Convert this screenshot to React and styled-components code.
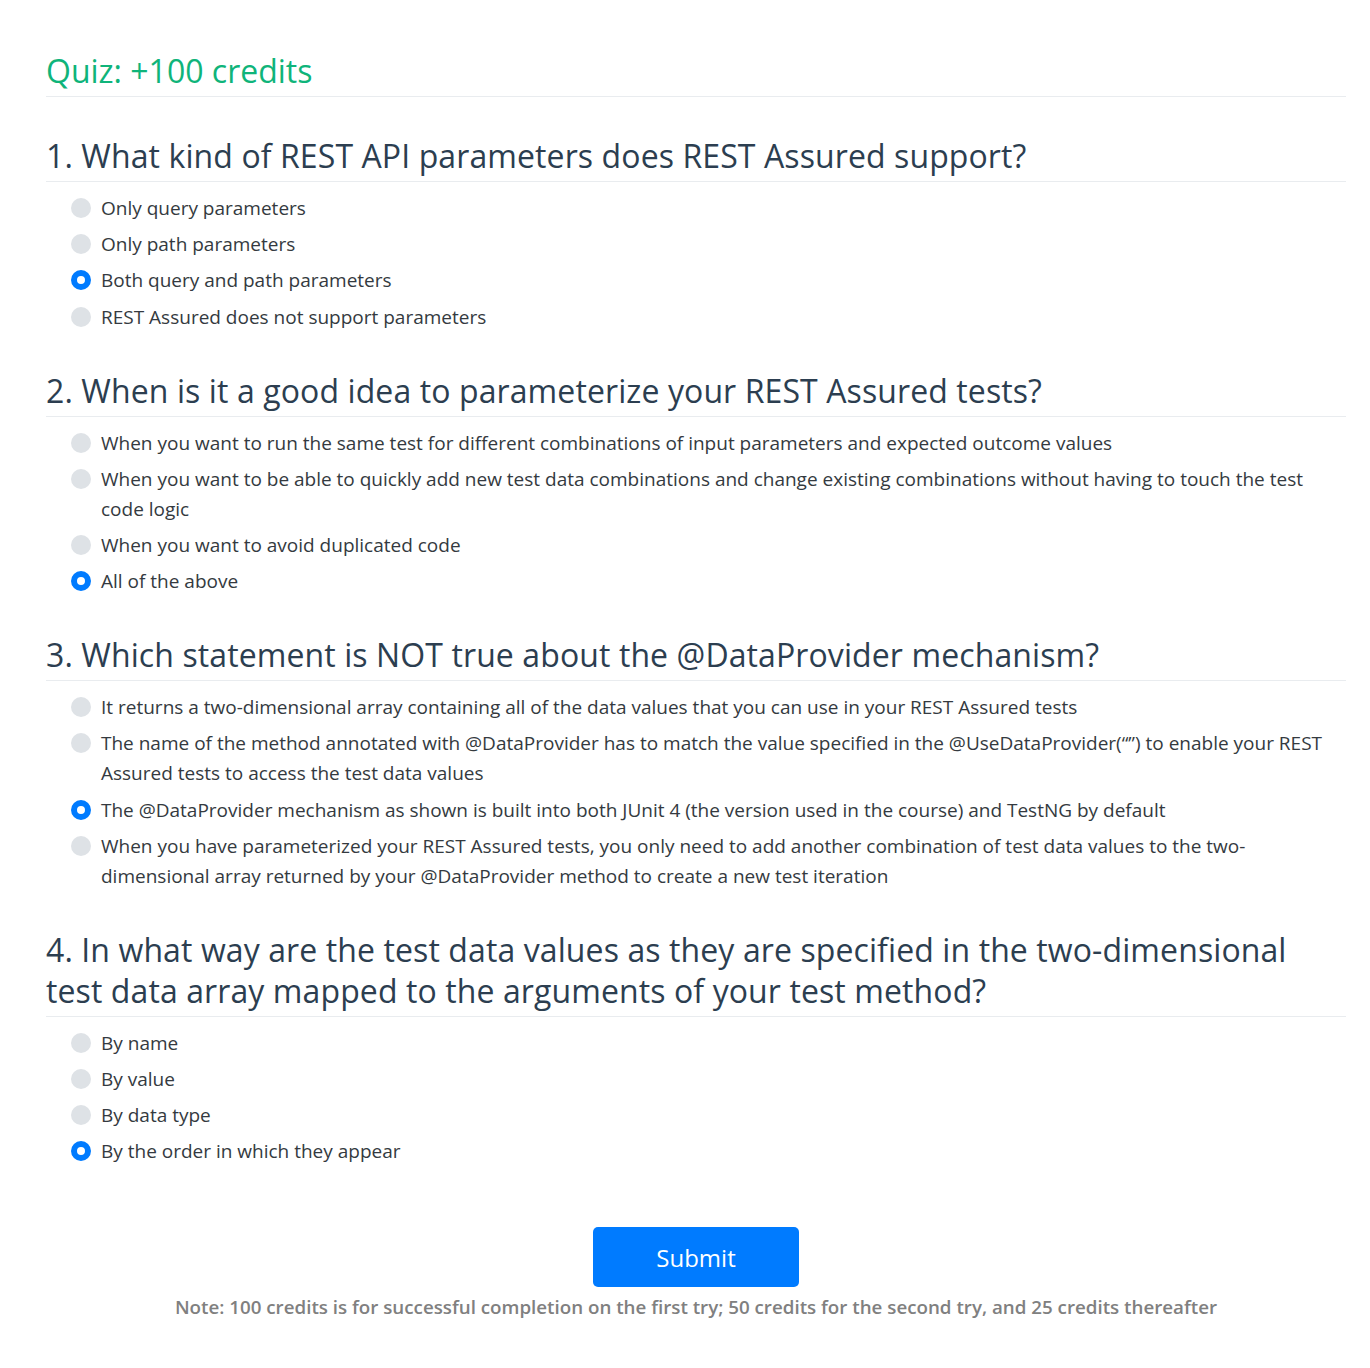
import React from "react";
import styled, { createGlobalStyle } from "styled-components";

const Global = createGlobalStyle`
  html, body { margin: 0; padding: 0; background: #fff; }
  body { font-family: "Open Sans", "Noto Sans", sans-serif; }
`;

const Page = styled.div`
  padding: 50px 24px 30px 46px;
`;

const Title = styled.h1`
  margin: 0;
  font-size: 32px;
  font-weight: 400;
  color: #0fb47a;
  line-height: 41px;
  padding-bottom: 5px;
  border-bottom: 1px solid #e9ecef;
`;

const Question = styled.section`
  margin-top: 38px;
`;

const QHeading = styled.h2`
  margin: 0;
  font-size: 32px;
  font-weight: 500;
  letter-spacing: 0.1px;
  color: #2c3e50;
  line-height: 41px;
  padding-bottom: 5px;
  border-bottom: 1px solid #e9ecef;
`;

const Options = styled.div`
  padding: 11px 0 0 25px;
  display: flex;
  flex-direction: column;
  gap: 6.2px;
`;

const Option = styled.label`
  display: flex;
  align-items: flex-start;
  font-size: 19px;
  line-height: 30px;
  color: #343a40;
`;

const Radio = styled.span`
  flex: none;
  width: 20px;
  height: 20px;
  border-radius: 50%;
  margin: 5px 10px 0 0;
  box-sizing: border-box;
  background: ${(p) => (p.$checked ? "#fff" : "#dee2e6")};
  border: ${(p) => (p.$checked ? "6px solid #007bff" : "none")};
`;

const Footer = styled.div`
  margin-top: 61px;
  display: flex;
  flex-direction: column;
  align-items: center;
`;

const SubmitButton = styled.button`
  width: 206px;
  height: 60px;
  border: none;
  border-radius: 5px;
  background: #007bff;
  color: #fff;
  font-family: inherit;
  font-size: 24px;
  cursor: pointer;
`;

const Note = styled.p`
  margin: 7px 0 0;
  font-size: 18.75px;
  font-weight: 600;
  color: #808080;
`;

const questions = [
  {
    q: "1. What kind of REST API parameters does REST Assured support?",
    opts: [
      "Only query parameters",
      "Only path parameters",
      "Both query and path parameters",
      "REST Assured does not support parameters",
    ],
    a: 2,
  },
  {
    q: "2. When is it a good idea to parameterize your REST Assured tests?",
    opts: [
      "When you want to run the same test for different combinations of input parameters and expected outcome values",
      "When you want to be able to quickly add new test data combinations and change existing combinations without having to touch the test code logic",
      "When you want to avoid duplicated code",
      "All of the above",
    ],
    a: 3,
  },
  {
    q: "3. Which statement is NOT true about the @DataProvider mechanism?",
    opts: [
      "It returns a two-dimensional array containing all of the data values that you can use in your REST Assured tests",
      "The name of the method annotated with @DataProvider has to match the value specified in the @UseDataProvider(\u201C\u201D) to enable your REST Assured tests to access the test data values",
      "The @DataProvider mechanism as shown is built into both JUnit 4 (the version used in the course) and TestNG by default",
      "When you have parameterized your REST Assured tests, you only need to add another combination of test data values to the two-dimensional array returned by your @DataProvider method to create a new test iteration",
    ],
    a: 2,
  },
  {
    q: "4. In what way are the test data values as they are specified in the two-dimensional test data array mapped to the arguments of your test method?",
    opts: ["By name", "By value", "By data type", "By the order in which they appear"],
    a: 3,
  },
];

export default function App() {
  return (
    <Page>
      <Global />
      <Title>Quiz: +100 credits</Title>
      {questions.map((item, i) => (
        <Question key={i}>
          <QHeading>{item.q}</QHeading>
          <Options>
            {item.opts.map((o, j) => (
              <Option key={j}>
                <Radio $checked={j === item.a} />
                <span>{o}</span>
              </Option>
            ))}
          </Options>
        </Question>
      ))}
      <Footer>
        <SubmitButton>Submit</SubmitButton>
        <Note>
          Note: 100 credits is for successful completion on the first try; 50 credits for the second try, and 25 credits thereafter
        </Note>
      </Footer>
    </Page>
  );
}
